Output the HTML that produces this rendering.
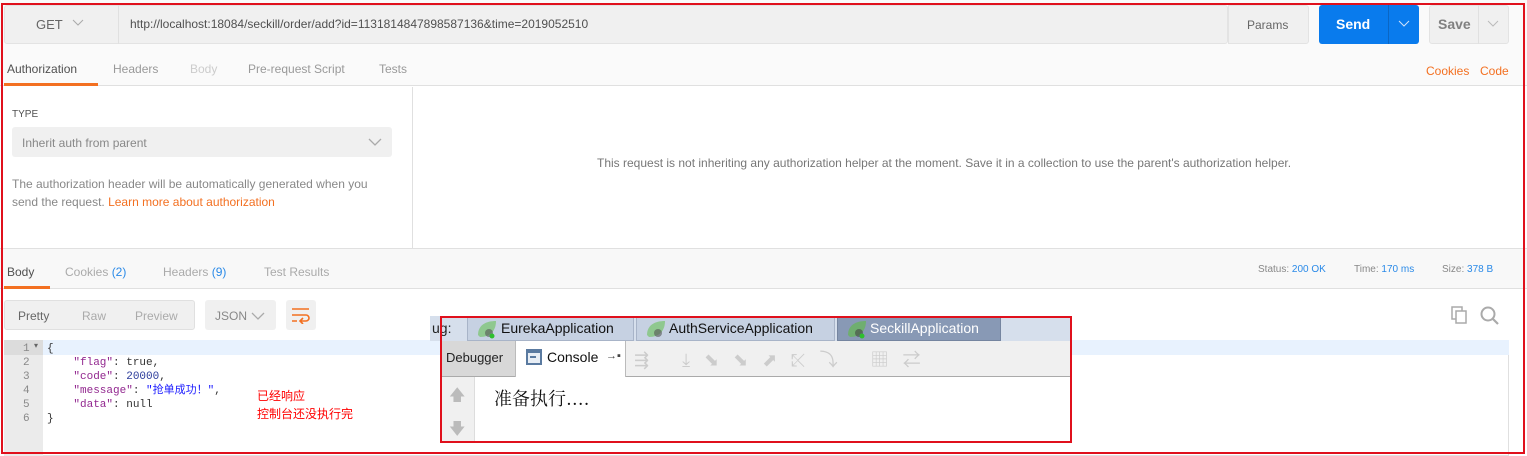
<!DOCTYPE html>
<html><head><meta charset="utf-8"><style>
*{box-sizing:border-box;margin:0;padding:0}
body{width:1527px;height:456px;position:relative;overflow:hidden;background:#fff;font-family:"Liberation Sans","Noto Sans CJK SC",sans-serif;font-size:12px;color:#505050}
.a{position:absolute}
.t{position:absolute;white-space:nowrap}
.mono{font-family:"Liberation Mono","Noto Sans CJK SC",monospace;font-size:11px}
</style></head><body>
<!-- top bar -->
<div class="a" style="left:0;top:0;width:1527px;height:48px;background:#fafafa"></div>
<div class="a" style="left:4px;top:5px;width:1224px;height:39px;background:#f0f0f0;border:1px solid #e3e3e3;border-radius:3px"></div>
<div class="a" style="left:118px;top:5px;width:1px;height:39px;background:#e0e0e0"></div>
<div class="t" style="left:36px;top:17px;font-size:13px;color:#666">GET</div>
<svg class="a" style="left:72px;top:19px" width="12" height="8"><path d="M1 1 L6 6 L11 1" stroke="#aaa" fill="none"/></svg>
<div class="t" style="left:130px;top:17px;font-size:12px;color:#505050">http://localhost:18084/seckill/order/add?id=1131814847898587136&amp;time=2019052510</div>
<div class="a" style="left:1228px;top:5px;width:81px;height:39px;background:#f0f0f0;border:1px solid #e3e3e3;border-radius:0 3px 3px 0"></div>
<div class="t" style="left:1247px;top:18px;font-size:12px;color:#666">Params</div>
<div class="a" style="left:1319px;top:5px;width:100px;height:39px;background:#097bed;border-radius:3px"></div>
<div class="a" style="left:1388px;top:5px;width:1px;height:39px;background:#0a66c4"></div>
<div class="t" style="left:1336px;top:16px;font-size:14px;font-weight:bold;color:#fff">Send</div>
<svg class="a" style="left:1398px;top:20px" width="12" height="8"><path d="M1 1 L6 6 L11 1" stroke="#cfe2fb" fill="none"/></svg>
<div class="a" style="left:1429px;top:5px;width:80px;height:39px;background:#f0f0f0;border:1px solid #e3e3e3;border-radius:3px"></div>
<div class="a" style="left:1478px;top:5px;width:1px;height:39px;background:#e0e0e0"></div>
<div class="t" style="left:1438px;top:16px;font-size:14px;font-weight:bold;color:#808080">Save</div>
<svg class="a" style="left:1487px;top:20px" width="12" height="8"><path d="M1 1 L6 6 L11 1" stroke="#bbb" fill="none"/></svg>
<!-- request tabs -->
<div class="a" style="left:0;top:48px;width:1527px;height:38px;background:#fafafa;border-bottom:1px solid #e0e0e0"></div>
<div class="t" style="left:7px;top:62px;color:#505050">Authorization</div>
<div class="a" style="left:4px;top:83px;width:94px;height:3px;background:#f37021"></div>
<div class="t" style="left:113px;top:62px;color:#999">Headers</div>
<div class="t" style="left:190px;top:62px;color:#ccc">Body</div>
<div class="t" style="left:248px;top:62px;color:#999">Pre-request Script</div>
<div class="t" style="left:379px;top:62px;color:#999">Tests</div>
<div class="t" style="left:1426px;top:64px;color:#f37021">Cookies</div>
<div class="t" style="left:1480px;top:64px;color:#f37021">Code</div>
<!-- auth panel -->
<div class="a" style="left:412px;top:87px;width:1px;height:161px;background:#e0e0e0"></div>
<div class="t" style="left:12px;top:109px;font-size:10px;color:#505050">TYPE</div>
<div class="a" style="left:12px;top:127px;width:380px;height:30px;background:#f0f0f0;border-radius:3px"></div>
<div class="t" style="left:22px;top:136px;color:#888">Inherit auth from parent</div>
<svg class="a" style="left:368px;top:138px" width="14" height="9"><path d="M1 1 L7 7 L13 1" stroke="#aaa" fill="none" stroke-width="1.3"/></svg>
<div class="t" style="left:12px;top:175px;color:#888;line-height:18px">The authorization header will be automatically generated when you<br>send the request. <span style="color:#f37021">Learn more about authorization</span></div>
<div class="t" style="left:597px;top:156px;color:#777">This request is not inheriting any authorization helper at the moment. Save it in a collection to use the parent's authorization helper.</div>
<!-- response tabs -->
<div class="a" style="left:0;top:248px;width:1527px;height:41px;background:#f8f8f8;border-top:1px solid #e0e0e0;border-bottom:1px solid #e0e0e0"></div>
<div class="t" style="left:7px;top:265px;color:#505050">Body</div>
<div class="a" style="left:4px;top:286px;width:46px;height:3px;background:#f37021"></div>
<div class="t" style="left:65px;top:265px;color:#aaa">Cookies <span style="color:#2a8ae8">(2)</span></div>
<div class="t" style="left:163px;top:265px;color:#aaa">Headers <span style="color:#2a8ae8">(9)</span></div>
<div class="t" style="left:264px;top:265px;color:#aaa">Test Results</div>
<div class="t" style="left:1258px;top:264px;font-size:10px;color:#888">Status: <span style="color:#2a8ae8">200 OK</span></div>
<div class="t" style="left:1354px;top:264px;font-size:10px;color:#888">Time: <span style="color:#2a8ae8">170 ms</span></div>
<div class="t" style="left:1442px;top:264px;font-size:10px;color:#888">Size: <span style="color:#2a8ae8">378 B</span></div>
<!-- body toolbar -->
<div class="a" style="left:4px;top:300px;width:191px;height:30px;background:#f0f0f0;border:1px solid #e0e0e0;border-radius:3px"></div>
<div class="t" style="left:18px;top:309px;color:#666">Pretty</div>
<div class="t" style="left:82px;top:309px;color:#aaa">Raw</div>
<div class="t" style="left:135px;top:309px;color:#aaa">Preview</div>
<div class="a" style="left:205px;top:300px;width:71px;height:30px;background:#f0f0f0;border-radius:3px"></div>
<div class="t" style="left:215px;top:309px;color:#888">JSON</div>
<svg class="a" style="left:251px;top:312px" width="14" height="8"><path d="M1 1 L7 7 L13 1" stroke="#aaa" fill="none" stroke-width="1.3"/></svg>
<div class="a" style="left:286px;top:300px;width:30px;height:30px;background:#f0f0f0;border-radius:3px"></div>
<svg class="a" style="left:291px;top:306px" width="20" height="18"><path d="M1 3 H18 M1 9 H15 a3 3 0 0 1 0 6 H10 M12 12 L9 15 L12 18 M1 15 H6" stroke="#f37021" fill="none" stroke-width="1.6"/></svg>
<svg class="a" style="left:1451px;top:306px" width="18" height="18"><rect x="1" y="1" width="10" height="12" fill="none" stroke="#aaa" stroke-width="1.5"/><rect x="5" y="5" width="10" height="12" fill="#fff" stroke="#aaa" stroke-width="1.5"/></svg>
<svg class="a" style="left:1480px;top:306px" width="20" height="20"><circle cx="8" cy="8" r="6.5" fill="none" stroke="#aaa" stroke-width="2"/><path d="M13 13 L18 18" stroke="#aaa" stroke-width="2.2"/></svg>
<!-- editor -->
<div class="a" style="left:4px;top:340px;width:1505px;height:116px;border:1px solid #e0e0e0;background:#fff"></div>
<div class="a" style="left:4px;top:340px;width:39px;height:116px;background:#ebebeb"></div>
<div class="a" style="left:43px;top:340px;width:1466px;height:15px;background:#e8f2fe"></div>
<div class="a" style="left:4px;top:340px;width:39px;height:15px;background:#dcdcdc"></div>
<div class="mono t" style="left:23px;top:342px;color:#888;line-height:14px">1<br>2<br>3<br>4<br>5<br>6</div>
<div class="t" style="left:34px;top:341px;font-size:8px;color:#666">▾</div>
<div class="mono t" style="left:47px;top:342px;color:#333;line-height:14px;white-space:pre">{
    <span style="color:#92278f">"flag"</span>: true,
    <span style="color:#92278f">"code"</span>: <span style="color:#164">​</span><span style="color:#2a3a9a">20000</span>,
    <span style="color:#92278f">"message"</span>: <span style="color:#1a1aff">"抢单成功！"</span>,
    <span style="color:#92278f">"data"</span>: null
}</div>
<div class="t" style="left:257px;top:387px;color:#f00;font-size:12px;line-height:18px">已经响应<br>控制台还没执行完</div>
<!-- popup -->
<div class="a" style="left:430px;top:316px;width:642px;height:25px;background:#d6dfec"></div>
<div class="t" style="left:432px;top:320px;font-size:14px;color:#222">ug:</div>
<div class="a" style="left:467px;top:317px;width:167px;height:24px;background:#c6d1e2;border:1px solid #a8b4c8"></div>
<div class="a" style="left:636px;top:317px;width:199px;height:24px;background:#c6d1e2;border:1px solid #a8b4c8"></div>
<div class="a" style="left:837px;top:317px;width:164px;height:24px;background:#8899b5;border:1px solid #7585a0"></div>
<svg class="a" style="left:476px;top:319px" width="22" height="20"><path d="M2 16 C2 6 10 2 20 2 C20 12 14 18 4 18Z" fill="#8fc88f"/><circle cx="13" cy="14" r="4" fill="#555" opacity=".6"/><circle cx="16" cy="17" r="2.5" fill="#2ec02e"/></svg>
<svg class="a" style="left:645px;top:319px" width="22" height="20"><path d="M2 16 C2 6 10 2 20 2 C20 12 14 18 4 18Z" fill="#8fc88f"/><circle cx="13" cy="14" r="4" fill="#555" opacity=".6"/></svg>
<svg class="a" style="left:846px;top:319px" width="22" height="20"><path d="M2 16 C2 6 10 2 20 2 C20 12 14 18 4 18Z" fill="#6fae6f"/><circle cx="13" cy="14" r="4" fill="#444" opacity=".6"/><circle cx="16" cy="17" r="2.5" fill="#2ec02e"/></svg>
<div class="t" style="left:501px;top:320px;font-size:14px;color:#111">EurekaApplication</div>
<div class="t" style="left:669px;top:320px;font-size:14px;color:#111">AuthServiceApplication</div>
<div class="t" style="left:870px;top:320px;font-size:14px;color:#fff">SeckillApplication</div>
<div class="a" style="left:441px;top:341px;width:630px;height:36px;background:#f0f0f0;border-bottom:1px solid #aaa"></div>
<div class="a" style="left:441px;top:341px;width:74px;height:35px;background:#d8d8d8"></div>
<div class="t" style="left:446px;top:350px;font-size:13px;color:#222">Debugger</div>
<div class="a" style="left:515px;top:341px;width:111px;height:36px;background:#fff;border-left:1px solid #bbb;border-right:1px solid #bbb"></div>
<svg class="a" style="left:525px;top:348px" width="18" height="18"><rect x="1" y="1" width="16" height="16" fill="#5a7aa0"/><rect x="3" y="5" width="12" height="10" fill="#e8eef5"/><rect x="5" y="8" width="6" height="2" fill="#5a7aa0"/></svg>
<div class="t" style="left:547px;top:349px;font-size:14px;color:#111">Console</div>
<div class="t" style="left:606px;top:350px;font-size:11px;color:#444">→▪</div>
<div class="t" style="left:634px;top:346px;font-size:18px;color:#ccc;letter-spacing:14px">⇶ ⤓⬊⬊⬈⤪⤵ ▦⇄</div>
<div class="a" style="left:441px;top:377px;width:630px;height:66px;background:#fff"></div>
<div class="a" style="left:441px;top:377px;width:34px;height:66px;background:#f0f0f0;border-right:1px solid #ddd"></div>
<div class="t" style="left:449px;top:384px;font-size:16px;color:#bbb">🡅</div>
<div class="t" style="left:449px;top:418px;font-size:16px;color:#bbb">🡇</div>
<div class="t" style="left:494px;top:385px;font-size:18px;color:#111;font-family:'Noto Serif CJK SC','Liberation Serif',serif">准备执行....</div>
<div class="a" style="left:440px;top:316px;width:632px;height:127px;border:2px solid #e0101c"></div>
<!-- outer red border -->
<div class="a" style="left:1px;top:3px;width:1524px;height:451px;border:2px solid #e0101c"></div>
</body></html>
